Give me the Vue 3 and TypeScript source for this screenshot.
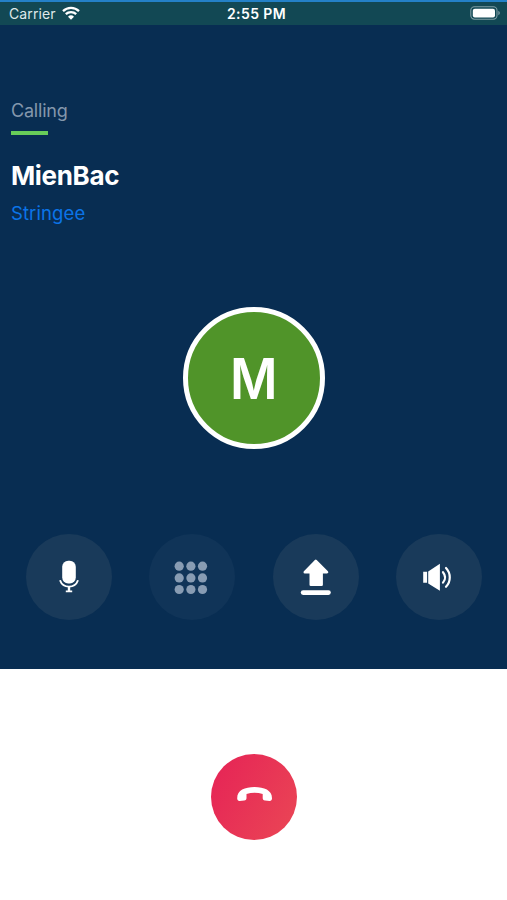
<script setup lang="ts">
import { ref } from 'vue'

type ActionId = 'mute' | 'keypad' | 'share' | 'speaker'

interface CallAction {
  id: ActionId
  label: string
  disabled: boolean
}

const call = {
  status: 'Calling',
  name: 'MienBac',
  service: 'Stringee',
  initial: 'M',
}

const actions = ref<CallAction[]>([
  { id: 'mute', label: 'Mute', disabled: false },
  { id: 'keypad', label: 'Keypad', disabled: true },
  { id: 'share', label: 'Share', disabled: false },
  { id: 'speaker', label: 'Speaker', disabled: false },
])

const keypadAxis = [30.2, 41.9, 53.5]
</script>

<template>
  <div class="screen">
    <header class="status-bar">
      <div class="carrier">
        <span>Carrier</span>
        <svg class="wifi" viewBox="0 0 18 14" aria-hidden="true">
          <path d="M1 5.1a11.6 11.6 0 0 1 16 0" />
          <path d="M3.8 8.2a7.5 7.5 0 0 1 10.4 0" />
          <path class="solid" d="M9 13.7 6 10.7a4.4 4.4 0 0 1 6 0z" />
        </svg>
      </div>
      <time class="clock">2:55 PM</time>
      <svg class="battery" viewBox="0 0 30 14" aria-hidden="true">
        <rect class="shell" x="0.8" y="0.8" width="26.2" height="12.4" rx="3.6" />
        <rect class="charge" x="2.8" y="2.8" width="22.2" height="8.6" rx="2" />
        <path class="tip" d="M28.3 4.8c2 .8 2 3.6 0 4.4z" />
      </svg>
    </header>

    <main class="call">
      <section class="caller">
        <p class="state">{{ call.status }}</p>
        <div class="accent"></div>
        <h1 class="name">{{ call.name }}</h1>
        <p class="service">{{ call.service }}</p>
      </section>

      <div class="avatar"><span class="initial">{{ call.initial }}</span></div>

      <nav class="actions">
        <button
          v-for="action in actions"
          :key="action.id"
          class="action"
          :class="{ disabled: action.disabled }"
          :aria-label="action.label"
          :disabled="action.disabled"
        >
          <svg viewBox="0 0 86 86" aria-hidden="true">
            <template v-if="action.id === 'mute'">
              <rect x="36.2" y="26.7" width="13.6" height="22.8" rx="6" />
              <path class="line" d="M34 46.2C35.5 50.4 38.7 52.6 43 52.6s7.5-2.2 9-6.4" />
              <path d="M41.8 52h2.4v4.4h2v1.9h-6.400v-1.900h2z" />
            </template>
            <template v-else-if="action.id === 'keypad'">
              <template v-for="(y, row) in keypadAxis" :key="row">
                <circle
                  v-for="(x, column) in keypadAxis"
                  :key="column"
                  :cx="x"
                  :cy="y + 2"
                  r="4.6"
                />
              </template>
            </template>
            <template v-else-if="action.id === 'share'">
              <path
                class="rounded"
                d="M42.8 27 54 38.2H48.600V50.800H37.800V38.200H31.800z"
              />
              <rect x="27.8" y="56.300" width="30" height="4.600" rx="2.300" />
            </template>
            <template v-else>
              <path d="M27.200 37.800h3.900v11h-3.900zM32.200 37.400 43.900 29.800V56.800L32.200 49.400z" />
              <path class="wave" d="M47 38.200c2.600 3.200 2.600 7.200 0 10.400" />
              <path class="wave" d="M50 34c5 5.200 5 13.600 0 18.800" />
            </template>
          </svg>
        </button>
      </nav>
    </main>

    <footer class="hangup-area">
      <button class="hangup" aria-label="End call">
        <svg viewBox="0 0 86 86" aria-hidden="true">
          <path
            d="M26.2 44.5C26 36.4 33.8 33.1 43.5 33.1S61.2 36.4 61 44.5C60.9 46.3 60 47 58.5 46.9L54 46.5C52.400 46.3 51.7 45.5 51.7 44V39.9C46.5 38.5 40.7 38.5 35.5 39.9V44C35.5 45.500 34.8 46.3 33.2 46.5L28.7 46.9C27.2 47 26.3 46.3 26.2 44.5z"
          />
        </svg>
      </button>
    </footer>
  </div>
</template>

<style>
body {
  margin: 0;
}
</style>

<style scoped>
.screen {
  display: flex;
  flex-direction: column;
  width: 507px;
  height: 900px;
  overflow: hidden;
  background: #fff;
  color: #fff;
  font-family: Inter, "Liberation Sans", sans-serif;
}

.status-bar {
  box-sizing: border-box;
  display: grid;
  grid-template-columns: 1fr auto 1fr;
  align-items: center;
  height: 25px;
  padding: 0 7px 0 9px;
  border-top: 2px solid #2481c8;
  background: #124854;
}

.carrier {
  display: flex;
  align-items: center;
  gap: 6px;
  font-size: 14px;
  line-height: 20px;
  letter-spacing: 0.1px;
  color: #dfe8ea;
}

.wifi {
  width: 18px;
  height: 14px;
  margin-top: -2px;
  fill: none;
  stroke: #fff;
  stroke-width: 2.3;
}

.wifi .solid {
  fill: #fff;
  stroke: none;
}

.clock {
  padding-left: 4px;
  font-size: 14px;
  line-height: 20px;
  font-weight: 600;
  letter-spacing: 0.4px;
}

.battery {
  justify-self: end;
  width: 30px;
  height: 14px;
  margin-top: -1px;
}

.shell {
  fill: none;
  stroke: #7f9da4;
  stroke-width: 1.1;
}

.charge {
  fill: #fff;
}

.tip {
  fill: #7f9da4;
}

.call {
  box-sizing: border-box;
  display: flex;
  flex-direction: column;
  align-items: center;
  height: 643.5px;
  padding-top: 74px;
  background: #082d52;
}

.caller {
  align-self: stretch;
  height: 208px;
  padding-left: 11px;
}

.state,
.name,
.service {
  margin: 0;
}

.state {
  font-size: 18px;
  line-height: 24px;
  letter-spacing: -0.2px;
  color: #8497ac;
}

.accent {
  width: 36.5px;
  height: 3.5px;
  margin-top: 8px;
  background: #68cd59;
}

.name {
  margin-top: 24.5px;
  font-size: 26px;
  line-height: 34px;
  font-weight: 700;
  letter-spacing: -0.35px;
}

.service {
  margin-top: 8px;
  font-size: 18.5px;
  line-height: 24px;
  letter-spacing: 0.1px;
  color: #0b74e8;
}

.avatar {
  box-sizing: border-box;
  display: flex;
  align-items: center;
  justify-content: center;
  width: 142px;
  height: 142px;
  border: 5px solid #fff;
  border-radius: 50%;
  background: #509429;
  font-size: 56px;
  line-height: 60px;
  font-weight: 600;
}

.initial {
  padding-top: 2px;
  transform: scaleX(0.92);
}

.actions {
  box-sizing: border-box;
  display: flex;
  justify-content: space-between;
  align-self: stretch;
  margin-top: 85px;
  padding: 0 25px 0 26px;
}

.action,
.hangup {
  width: 86px;
  height: 86px;
  padding: 0;
  border: 0;
  border-radius: 50%;
}

.action {
  background: #193a5a;
}

.action.disabled {
  background: #103458;
}

.action svg,
.hangup svg {
  display: block;
  width: 86px;
  height: 86px;
  fill: #fff;
}

.action.disabled svg {
  fill: #889cb3;
}

.line,
.wave {
  fill: none;
  stroke: #fff;
  stroke-width: 1.9;
}

.wave {
  stroke-width: 2.2;
  stroke-linecap: round;
}

.rounded {
  stroke: #fff;
  stroke-width: 2.6;
  stroke-linejoin: round;
}

.hangup-area {
  display: flex;
  justify-content: center;
  padding-top: 85.5px;
}

.hangup {
  background: linear-gradient(120deg, #e62656 10%, #ea4755 100%);
}
</style>
